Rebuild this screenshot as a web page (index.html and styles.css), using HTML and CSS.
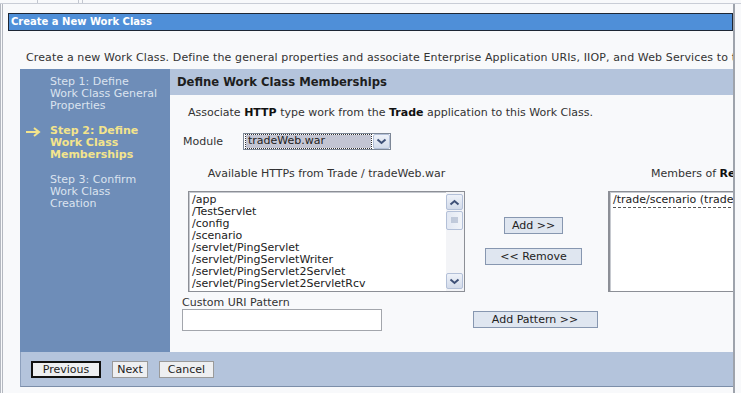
FILE: index.html
```html
<!DOCTYPE html>
<html lang="en">
<head>
    <meta charset="UTF-8">
    <title>Create a New Work Class</title>
    <link rel="stylesheet" href="styles.css">
</head>
<body>
    <div class="topbar">
        <span class="tab tab-a"></span>
        <span class="tab tab-b"></span>
        <span class="tab tab-c"></span>
    </div>

    <div class="frame">
        <div class="title-bar">Create a New Work Class</div>
        <p class="desc">Create a new Work Class. Define the general properties and associate Enterprise Application URIs, IIOP, and Web Services to this Work Class.</p>

        <div class="wizard">
            <div class="wizard-body">
                <ul class="steps">
                    <li class="step">
                        <span class="step-mark"></span>
                        <span>Step 1: Define<br>Work Class General<br>Properties</span>
                    </li>
                    <li class="step current">
                        <span class="step-mark">
                            <svg width="16" height="10" viewBox="0 0 16 10"><path d="M1 5 H14 M9 1 L14 5 L9 9" fill="none" stroke="#f3e48c" stroke-width="2"/></svg>
                        </span>
                        <span>Step 2: Define<br>Work Class<br>Memberships</span>
                    </li>
                    <li class="step">
                        <span class="step-mark"></span>
                        <span>Step 3: Confirm<br>Work Class<br>Creation</span>
                    </li>
                </ul>

                <div class="panel">
                    <div class="panel-head">Define Work Class Memberships</div>
                    <div class="panel-body">
                        <p class="intro">Associate <b>HTTP</b> type work from the <b>Trade</b> application to this Work Class.</p>

                        <div class="module-row">
                            <label class="module-label">Module</label>
                            <div class="select">
                                <span class="select-value">tradeWeb.war</span>
                                <span class="select-btn">
                                    <svg width="11" height="7" viewBox="0 0 11 7"><path d="M1.5 1.5 L5.5 5 L9.5 1.5" fill="none" stroke="#3e5077" stroke-width="2"/></svg>
                                </span>
                            </div>
                        </div>

                        <div class="members">
                            <div class="col-head avail-head">Available HTTPs from Trade / tradeWeb.war</div>
                            <div class="col-head member-head">Members of <b>RegularServlets</b></div>

                            <div class="listbox avail-list">
                                <div class="items">
                                    <div>/app</div>
                                    <div>/TestServlet</div>
                                    <div>/config</div>
                                    <div>/scenario</div>
                                    <div>/servlet/PingServlet</div>
                                    <div>/servlet/PingServletWriter</div>
                                    <div>/servlet/PingServlet2Servlet</div>
                                    <div>/servlet/PingServlet2ServletRcv</div>
                                </div>
                                <div class="scrollbar">
                                    <span class="sb-btn">
                                        <svg width="11" height="7" viewBox="0 0 11 7"><path d="M1.5 5.5 L5.5 2 L9.5 5.5" fill="none" stroke="#3e5077" stroke-width="2"/></svg>
                                    </span>
                                    <span class="sb-thumb">
                                        <svg width="7" height="7" viewBox="0 0 7 7"><path d="M0 1 H7 M0 3 H7 M0 5 H7" stroke="#98a6c0" stroke-width="1"/></svg>
                                    </span>
                                    <span class="sb-track"></span>
                                    <span class="sb-btn">
                                        <svg width="11" height="7" viewBox="0 0 11 7"><path d="M1.5 1.5 L5.5 5 L9.5 1.5" fill="none" stroke="#3e5077" stroke-width="2"/></svg>
                                    </span>
                                </div>
                            </div>

                            <div class="move-buttons">
                                <button class="btn add-btn">Add &gt;&gt;</button>
                                <button class="btn remove-btn">&lt;&lt; Remove</button>
                            </div>

                            <div class="listbox member-list">
                                <div class="items">
                                    <div>/trade/scenario (tradeWeb.war)</div>
                                    <div class="dashes"></div>
                                </div>
                            </div>

                            <label class="uri-label" for="uri">Custom URI Pattern</label>
                            <input class="uri-input" id="uri" type="text">
                            <button class="btn pattern-btn">Add Pattern &gt;&gt;</button>
                        </div>
                    </div>
                </div>
            </div>

            <div class="wizard-foot">
                <button class="foot-btn default-btn">Previous</button>
                <button class="foot-btn next-btn">Next</button>
                <button class="foot-btn cancel-btn">Cancel</button>
            </div>
        </div>
    </div>
</body>
</html>
```

FILE: styles.css
```css
html, body {
    margin: 0;
    padding: 0;
    background-color: #f8f9fb;
    font-family: "DejaVu Sans", Verdana, sans-serif;
    font-size: 11px;
    color: #333333;
}

p, ul {
    margin: 0;
    padding: 0;
}

/* strip left over from the tab row above */
.topbar {
    display: flex;
    height: 3px;
    border-bottom: 1px solid #c9cdd6;
}

.tab {
    border-right: 1px solid #c3c7d0;
}

.tab-a { width: 37px; }
.tab-b { width: 40px; }
.tab-c { width: 3px; }

.frame {
    width: 725px;
    height: 389px;
    padding-left: 5px;
    border-left: 3px double #b4b8c0;
    border-right: 2px solid #9ea3ac;
    overflow: hidden;
}

.title-bar {
    margin-top: 9px;
    height: 16px;
    line-height: 16px;
    padding-left: 2px;
    background-color: #4f8fd8;
    border: 1px solid #1d2634;
    color: #ffffff;
    font-size: 10px;
    font-weight: bold;
}

.desc {
    margin: 21px 0 5px 18px;
    line-height: 12px;
    letter-spacing: 0.12px;
    white-space: nowrap;
}

.wizard {
    width: 760px;
    margin-left: 12px;
}

.wizard-body {
    display: grid;
    grid-template-columns: 150px 1fr;
}

/* left column with the wizard steps */
.steps {
    list-style: none;
    padding-top: 7px;
    background-color: #6e8db8;
}

.step {
    display: flex;
    line-height: 12px;
    margin-bottom: 13px;
    color: #dbe3ef;
}

.step.current {
    color: #f3e48c;
    font-weight: bold;
}

.step-mark {
    width: 25px;
    padding-left: 5px;
    padding-top: 2px;
}

.panel-head {
    height: 26px;
    line-height: 26px;
    padding-left: 7px;
    background-color: #b4c4dc;
    color: #1e1e1e;
    font-size: 11.6px;
    font-weight: bold;
}

.panel-body {
    padding: 12px 0 21px 12px;
}

.intro {
    margin: 0 0 14px 6px;
    line-height: 12px;
}

.intro b, .member-head b {
    color: #111111;
}

.module-row {
    display: flex;
    align-items: center;
    height: 17px;
}

.module-label {
    width: 60px;
    padding-left: 1px;
}

.select {
    display: flex;
    width: 146px;
    height: 15px;
    border: 1px solid #7d8796;
    background-color: #ffffff;
}

.select-value {
    flex: 1;
    margin: 1px 2px;
    padding-left: 2px;
    line-height: 11px;
    background-color: #c3c5d3;
    outline: 1px dotted #333333;
    color: #222222;
}

.select-btn, .sb-btn {
    display: flex;
    align-items: center;
    justify-content: center;
    width: 15px;
    border: 1px solid #b3c0d8;
    border-radius: 2px;
    background: linear-gradient(#eef2f9, #d3dbea);
}

.members {
    display: grid;
    grid-template-columns: 283px 143px 283px;
    margin-top: 18px;
}

.col-head {
    line-height: 12px;
    margin-bottom: 11px;
    white-space: nowrap;
}

.avail-head {
    grid-column: 1;
    padding-left: 6px;
    text-align: center;
}

.member-head {
    grid-column: 3;
    padding-left: 43px;
}

.listbox {
    display: flex;
    height: 99px;
    border: 1px solid #8c8f96;
    box-shadow: inset 1px 1px 0 #c6c9cf;
    background-color: #ffffff;
    overflow: hidden;
}

.avail-list {
    grid-column: 1;
    margin-left: 6px;
}

.member-list {
    grid-column: 3;
    border-left: 2px solid #8c8f96;
}

.items {
    flex: 1;
    padding: 2px 0 0 3px;
    line-height: 12px;
    color: #222222;
    white-space: nowrap;
}

.dashes {
    height: 1px;
    margin-top: 1px;
    background: repeating-linear-gradient(90deg, #555555 0 3px, transparent 3px 5px);
}

.scrollbar {
    display: flex;
    flex-direction: column;
    width: 17px;
    padding: 2px 1px 2px 0;
    background-color: #f3f4f7;
}

.sb-btn {
    height: 14px;
}

.sb-thumb {
    display: flex;
    align-items: center;
    justify-content: center;
    height: 17px;
    margin-top: 1px;
    border: 1px solid #b3c0d8;
    border-radius: 2px;
    background: linear-gradient(90deg, #e2e8f3, #f1f4f9);
}

.sb-track {
    flex: 1;
}

.move-buttons {
    grid-column: 2;
    display: flex;
    flex-direction: column;
    align-items: center;
    gap: 14px;
    padding-top: 26px;
    padding-right: 6px;
}

.btn {
    height: 17px;
    padding: 0;
    border: 1px solid #8797b0;
    background-color: #dfe6f0;
    font-family: "DejaVu Sans", Verdana, sans-serif;
    font-size: 11px;
    color: #222222;
}

.add-btn { width: 59px; }
.remove-btn { width: 97px; }

.uri-label {
    grid-column: 1;
    margin-top: 5px;
    line-height: 12px;
}

.uri-input {
    grid-column: 1;
    width: 200px;
    height: 22px;
    box-sizing: border-box;
    border: 1px solid #a3a6ac;
    background-color: #ffffff;
}

.pattern-btn {
    grid-column: 2;
    align-self: center;
    justify-self: center;
    width: 125px;
    margin: 0 3px 2px 0;
}

.wizard-foot {
    display: flex;
    gap: 11px;
    height: 25px;
    padding: 9px 0 0 10px;
    background-color: #b4c4dc;
    border-left: 1px solid #8da0bd;
    border-bottom: 1px solid #7c8ea9;
}

.foot-btn {
    height: 17px;
    padding: 0;
    border: 1px solid #9a9a9a;
    background-color: #eeeff1;
    font-family: "DejaVu Sans", Verdana, sans-serif;
    font-size: 11px;
    color: #222222;
}

.default-btn {
    width: 70px;
    border: 2px solid #111111;
}

.next-btn { width: 36px; }
.cancel-btn { width: 55px; }
```
